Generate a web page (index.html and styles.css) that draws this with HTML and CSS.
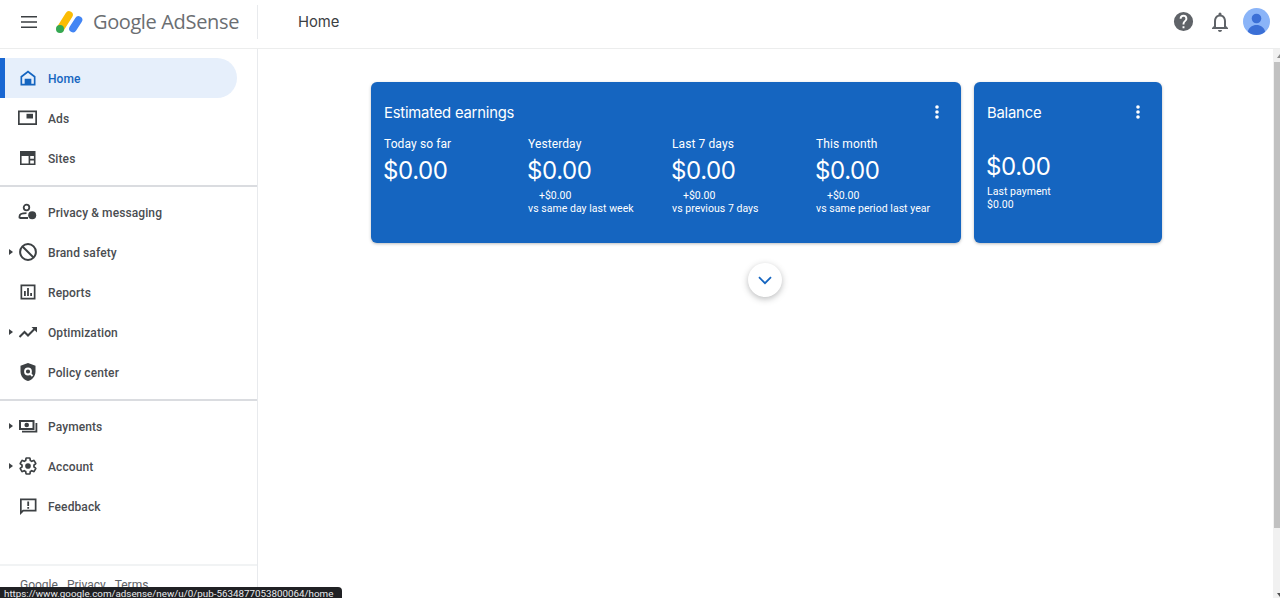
FILE: index.html

```html
<!DOCTYPE html>
<html>
<head>
	<meta charset="utf-8">
	<title>Home - Google AdSense</title>
	<link rel="stylesheet" href="styles.css">
</head>
<body>
	<header class="topbar">
		<div class="brand">
			<svg class="menu-icon" width="24" height="24" viewBox="0 0 24 24"><path d="M4 6h16v1.600H4zM4 11.200h16v1.600H4zM4 16.400h16V18H4z" fill="#3c4043"/></svg>
			<svg class="logo" width="30" height="26" viewBox="0 0 30 26">
				<path d="M5.500 19.500 L14 6" stroke="#fbbc04" stroke-width="7.600" stroke-linecap="round"/>
				<path d="M18 19.500 L23.500 11" stroke="#4285f4" stroke-width="7.600" stroke-linecap="round"/>
				<circle cx="5" cy="20" r="4" fill="#34a853"/>
			</svg>
			<span class="wordmark"><span class="wordmark-g">Google</span> AdSense</span>
		</div>
		<h1 class="page-title">Home</h1>
		<div class="top-actions">
			<svg width="23" height="23" viewBox="0 0 24 24"><path fill="#5f6368" d="M12 2a10 10 0 1 0 0 20 10 10 0 0 0 0-20zm1 17h-2v-2h2v2zm2.070-7.750-.9.920C13.450 12.900 13 13.500 13 15h-2v-.5c0-1.100.45-2.100 1.170-2.830l1.240-1.260A2 2 0 1 0 10 9H8a4 4 0 1 1 8 0c0 .88-.36 1.680-.93 2.250z"/></svg>
			<svg class="bell" width="24" height="24" viewBox="0 0 24 24"><path fill="#5f6368" d="M12 22c1.100 0 2-.9 2-2h-4c0 1.100.9 2 2 2zm6-6v-5c0-3.070-1.630-5.640-4.500-6.320V4a1.500 1.500 0 0 0-3 0v.68C7.640 5.360 6 7.920 6 11v5l-2 2v1h16v-1l-2-2zm-2 1H8v-6c0-2.480 1.510-4.500 4-4.500s4 2.020 4 4.500v6z"/></svg>
			<svg class="avatar" width="27" height="27" viewBox="0 0 27 27"><circle cx="13.500" cy="13.500" r="13.500" fill="#8ab4f8"/><circle cx="13.500" cy="10.500" r="4.800" fill="#3b6fd6"/><path d="M4.800 23.800c1-4.600 4.600-6.800 8.700-6.800s7.700 2.200 8.700 6.800a13.500 13.500 0 0 1-17.400 0z" fill="#3b6fd6"/></svg>
		</div>
	</header>

	<div class="shell">
		<nav class="sidebar">
			<div class="nav-group first">
				<a class="nav-item active">
					<svg width="20" height="20" viewBox="0 0 24 24"><path fill="#1565c0" d="M12 3 3 10v11h18V10l-9-7zm7 16h-3v-6H8v6H5v-8l7-5.400 7 5.400v8z"/></svg>
					<span>Home</span>
				</a>
				<a class="nav-item">
					<svg width="20" height="20" viewBox="0 0 20 20"><path fill="#3c4043" fill-rule="evenodd" d="M0 2.500h19v14.500H0zm1.700 1.700v11.100h15.600V4.200z"/><path fill="#3c4043" d="M8.500 5.800h6.500v4.700H8.500z"/></svg>
					<span>Ads</span>
				</a>
				<a class="nav-item">
					<svg width="20" height="20" viewBox="0 0 20 20"><path fill="#3c4043" fill-rule="evenodd" d="M2 3h15.500v14H2zm1.600 5v7.400h7V8zm8.600 0v2.800h3.700V8zm0 4.400v3h3.700v-3z"/></svg>
					<span>Sites</span>
				</a>
			</div>
			<div class="nav-group">
				<a class="nav-item">
					<svg width="20" height="20" viewBox="0 0 20 20"><circle cx="8.500" cy="5.500" r="2.800" fill="none" stroke="#3c4043" stroke-width="1.800"/><path fill="none" stroke="#3c4043" stroke-width="1.800" d="M1.500 16.200v-1.800c0-2 3.200-3.200 7-3.200M1.500 16H10"/><circle cx="14.200" cy="13.200" r="4" fill="#3c4043"/></svg>
					<span>Privacy &amp; messaging</span>
				</a>
				<a class="nav-item has-arrow">
					<svg width="20" height="20" viewBox="0 0 20 20"><circle cx="10" cy="10" r="7.900" fill="none" stroke="#3c4043" stroke-width="2"/><path d="M4.500 4.500l11 11" stroke="#3c4043" stroke-width="2"/></svg>
					<span>Brand safety</span>
				</a>
				<a class="nav-item">
					<svg width="20" height="20" viewBox="0 0 20 20"><path fill="#3c4043" fill-rule="evenodd" d="M2.500 2.500h15v15h-15zm1.700 1.700v11.600h11.600V4.200z"/><path fill="#3c4043" d="M6 9h1.800v5H6zM9.100 6h1.800v8H9.100zM12.200 11H14v3h-1.800z"/></svg>
					<span>Reports</span>
				</a>
				<a class="nav-item has-arrow">
					<svg width="20" height="20" viewBox="0 0 20 20"><path fill="none" stroke="#3c4043" stroke-width="2" d="M1.500 15l5-5 3.500 3.500 7-7"/><path fill="#3c4043" d="M13.500 5H19v5.500z"/></svg>
					<span>Optimization</span>
				</a>
				<a class="nav-item">
					<svg width="20" height="20" viewBox="0 0 20 20"><path fill="#3c4043" d="M10 1l7.500 2.800v5.700c0 4.500-3.100 8.300-7.500 9.500-4.400-1.200-7.500-5-7.500-9.500V3.800z"/><circle cx="10" cy="9.500" r="3" fill="none" stroke="#fff" stroke-width="1.800"/><path d="M12 11.500l2.500 2.500" stroke="#fff" stroke-width="1.800"/></svg>
					<span>Policy center</span>
				</a>
			</div>
			<div class="nav-group last">
				<a class="nav-item has-arrow">
					<svg width="20" height="20" viewBox="0 0 20 20"><path fill="#3c4043" fill-rule="evenodd" d="M1 4h15.500v10H1zm2 2v6h11.500V6z"/><circle cx="8.700" cy="9" r="2.300" fill="#3c4043"/><path fill="#3c4043" d="M17.500 7h1.800v9.500H4v-1.800h13.500z"/></svg>
					<span>Payments</span>
				</a>
				<a class="nav-item has-arrow">
					<svg width="20" height="20" viewBox="0 0 24 24"><path fill="none" stroke="#3c4043" stroke-width="2" d="M19.140 12.940c.04-.3.060-.61.060-.94 0-.32-.02-.64-.07-.94l2.030-1.580c.18-.14.23-.41.12-.61l-1.920-3.320c-.12-.22-.37-.29-.59-.22l-2.390.96c-.5-.38-1.030-.7-1.620-.94l-.36-2.540c-.04-.24-.24-.41-.48-.41h-3.840c-.24 0-.43.17-.47.41l-.36 2.540c-.59.24-1.130.57-1.620.94l-2.390-.96c-.22-.08-.47 0-.59.22L2.740 8.870c-.12.21-.08.47.12.61l2.030 1.580c-.05.3-.09.63-.09.94s.02.64.07.94l-2.030 1.580c-.18.14-.23.41-.12.61l1.920 3.320c.12.22.37.29.59.22l2.390-.96c.5.38 1.030.7 1.620.94l.36 2.540c.05.24.24.41.48.41h3.840c.24 0 .44-.17.47-.41l.36-2.540c.59-.24 1.130-.56 1.620-.94l2.390.96c.22.08.47 0 .59-.22l1.920-3.320c.12-.22.07-.47-.12-.61l-2.010-1.580z"/><circle cx="12" cy="12" r="3.400" fill="#3c4043"/></svg>
					<span>Account</span>
				</a>
				<a class="nav-item">
					<svg width="20" height="20" viewBox="0 0 20 20"><path fill="#3c4043" fill-rule="evenodd" d="M2 2.500h16.500v13H5.500L2 19zm1.700 1.700v10.600l1.100-1h12V4.200z"/><path fill="#3c4043" d="M9.300 5.500h1.800v4.500H9.300zM9.300 11h1.800v1.800H9.300z"/></svg>
					<span>Feedback</span>
				</a>
			</div>
			<div class="side-footer">
				<a>Google</a>
				<a>Privacy</a>
				<a>Terms</a>
			</div>
		</nav>

		<main class="content">
			<div class="cards">
				<section class="card earnings">
					<div class="card-head">
						<h2>Estimated earnings</h2>
						<svg class="more" width="4" height="14" viewBox="0 0 4 14"><circle cx="2" cy="2" r="1.800"/><circle cx="2" cy="7" r="1.800"/><circle cx="2" cy="12" r="1.800"/></svg>
					</div>
					<div class="stats">
						<div class="stat">
							<div class="stat-label">Today so far</div>
							<div class="amount">$0.00</div>
						</div>
						<div class="stat">
							<div class="stat-label">Yesterday</div>
							<div class="amount">$0.00</div>
							<div class="delta">+$0.00</div>
							<div class="small-line">vs same day last week</div>
						</div>
						<div class="stat">
							<div class="stat-label">Last 7 days</div>
							<div class="amount">$0.00</div>
							<div class="delta">+$0.00</div>
							<div class="small-line">vs previous 7 days</div>
						</div>
						<div class="stat">
							<div class="stat-label">This month</div>
							<div class="amount">$0.00</div>
							<div class="delta">+$0.00</div>
							<div class="small-line">vs same period last year</div>
						</div>
					</div>
				</section>
				<section class="card balance">
					<div class="card-head">
						<h2>Balance</h2>
						<svg class="more" width="4" height="14" viewBox="0 0 4 14"><circle cx="2" cy="2" r="1.800"/><circle cx="2" cy="7" r="1.800"/><circle cx="2" cy="12" r="1.800"/></svg>
					</div>
					<div class="amount balance-amount">$0.00</div>
					<div class="small-line">Last payment</div>
					<div class="small-line">$0.00</div>
				</section>
			</div>
			<button class="expand">
				<svg width="14" height="9" viewBox="0 0 14 9"><path d="M1 1.200l6 6 6-6" fill="none" stroke="#1565c0" stroke-width="1.800"/></svg>
			</button>
		</main>
		<div class="scrollbar">
			<div class="scroll-up"></div>
			<div class="scroll-thumb"></div>
			<div class="scroll-down"></div>
		</div>
	</div>

	<div class="status-url">https://www.google.com/adsense/new/u/0/pub-5634877053800064/home</div>
</body>
</html>
```

FILE: styles.css

```css
html, body {
	height: 100%;
}
body {
	margin: 0;
	overflow: hidden;
	font-family: Roboto, "Liberation Sans", sans-serif;
	color: #3c4043;
	background: #fff;
}

/* top bar */
.topbar {
	display: flex;
	align-items: center;
	height: 48px;
	box-sizing: content-box;
	border-bottom: 1px solid #eceded;
}
.brand {
	display: flex;
	align-items: center;
	width: 257px;
	height: 34px;
	margin-bottom: 5px;
	border-right: 1px solid #e8eaed;
}
.menu-icon {
	margin-left: 17px;
}
.logo {
	margin-left: 14px;
}
.wordmark {
	margin-left: 8px;
	font-family: "Open Sans", Roboto, sans-serif;
	font-size: 20px;
	letter-spacing: -0.3px;
	color: #6b6e72;
	white-space: nowrap;
}
.wordmark-g {
	font-weight: 500;
	letter-spacing: -0.4px;
}
.page-title {
	margin: 0 0 5px 40px;
	font-size: 14.800px;
	font-weight: 400;
	color: #3c4043;
	font-family: Inter, Roboto, sans-serif;
}
.top-actions {
	display: flex;
	align-items: center;
	margin: 0 10px 5px auto;
}
.bell {
	margin-left: 13px;
}
.avatar {
	margin-left: 11px;
}

/* sidebar */
.shell {
	display: flex;
	height: 549px;
}
.sidebar {
	flex: none;
	width: 257px;
	border-right: 1px solid #e8eaed;
	display: flex;
	flex-direction: column;
	overflow: hidden;
}
.nav-group {
	padding: 5px 0 7px;
	border-top: 2px solid #dadce0;
}
.nav-group.first {
	padding-top: 9px;
	border-top: 0;
}
.nav-group.last {
	flex: 1;
}
.nav-item {
	position: relative;
	display: flex;
	align-items: center;
	height: 40px;
	width: 237px;
	box-sizing: border-box;
	padding-left: 18px;
	font-size: 12px;
	font-weight: 500;
	letter-spacing: 0.1px;
	color: #4a4d51;
}
.nav-item span {
	margin: 2px 0 0 10px;
}
.nav-item.active {
	color: #1565c0;
	background: #e6effb;
	border-radius: 0 20px 20px 0;
	border-left: 5px solid #1967d2;
	padding-left: 13px;
}
.nav-item.has-arrow::before {
	content: "";
	position: absolute;
	left: 9px;
	top: 17px;
	border-left: 4px solid #3c4043;
	border-top: 3px solid transparent;
	border-bottom: 3px solid transparent;
}
.side-footer {
	display: flex;
	gap: 9px;
	height: 34px;
	padding: 12px 0 0 20px;
	box-sizing: border-box;
	border-top: 2px solid #f1f3f4;
	font-size: 12px;
	color: #5f6368;
	flex: none;
}

/* cards */
.content {
	flex: 1;
	display: flex;
	flex-direction: column;
	align-items: center;
	padding: 33px 0 0 2px;
}
.cards {
	display: flex;
	gap: 13px;
}
.card {
	height: 161px;
	box-sizing: border-box;
	background: #1565c0;
	color: #fff;
	border-radius: 6px;
	box-shadow: 0 1px 3px rgba(60, 64, 67, 0.35);
	padding: 18px 13px 0;
}
.earnings {
	width: 590px;
}
.balance {
	width: 188px;
}
.card-head {
	display: flex;
	align-items: center;
	justify-content: space-between;
	height: 25px;
	padding-right: 9px;
}
.card-head h2 {
	margin: 0;
	font-size: 14.800px;
	font-weight: 400;
	font-family: Inter, Roboto, sans-serif;
	letter-spacing: -0.2px;
}
.more {
	fill: #fff;
	margin-top: -2px;
}
.stats {
	display: flex;
	margin-top: 11px;
}
.stat {
	flex: none;
	width: 144px;
}
.stat-label {
	font-size: 12px;
	letter-spacing: 0.1px;
	line-height: 16px;
}
.amount {
	margin: 5px 0 0 -1px;
	font-family: Inter, Roboto, sans-serif;
	font-size: 24px;
	line-height: 28px;
	letter-spacing: -0.4px;
}
.delta {
	margin: 4px 0 0 11px;
	font-size: 10.500px;
	line-height: 13px;
}
.small-line {
	font-size: 10.500px;
	line-height: 13px;
	letter-spacing: 0.04px;
}
.balance-amount {
	margin: 28px 0 4px -1px;
}
.expand {
	margin: 20px 3px 0 0;
	width: 34px;
	height: 34px;
	padding: 0;
	border: 0;
	border-radius: 50%;
	background: #fff;
	box-shadow: 0 2px 6px rgba(60, 64, 67, 0.35);
}

/* window scrollbar, cut off by the right edge of the shot */
.scrollbar {
	flex: none;
	width: 7px;
	box-sizing: border-box;
	padding-left: 1px;
	background: #f1f1f1;
	display: flex;
	flex-direction: column;
	align-items: flex-end;
}
.scroll-up, .scroll-down {
	width: 0;
	height: 0;
	border-left: 3px solid transparent;
}
.scroll-up {
	margin-top: 5px;
	border-bottom: 4px solid #8c8c8c;
}
.scroll-thumb {
	width: 6px;
	height: 466px;
	margin-top: 4px;
	background: #c1c1c1;
}
.scroll-down {
	margin-top: auto;
	margin-bottom: 1px;
	border-top: 4px solid #505050;
}

/* link preview at the bottom of the window */
.status-url {
	position: absolute;
	left: 0;
	bottom: 0;
	width: 342px;
	height: 11px;
	box-sizing: border-box;
	padding-left: 4px;
	overflow: hidden;
	background: #202124;
	border-radius: 0 4px 0 0;
	color: #e8eaed;
	font-size: 9.800px;
	line-height: 14px;
	white-space: nowrap;
}
```
